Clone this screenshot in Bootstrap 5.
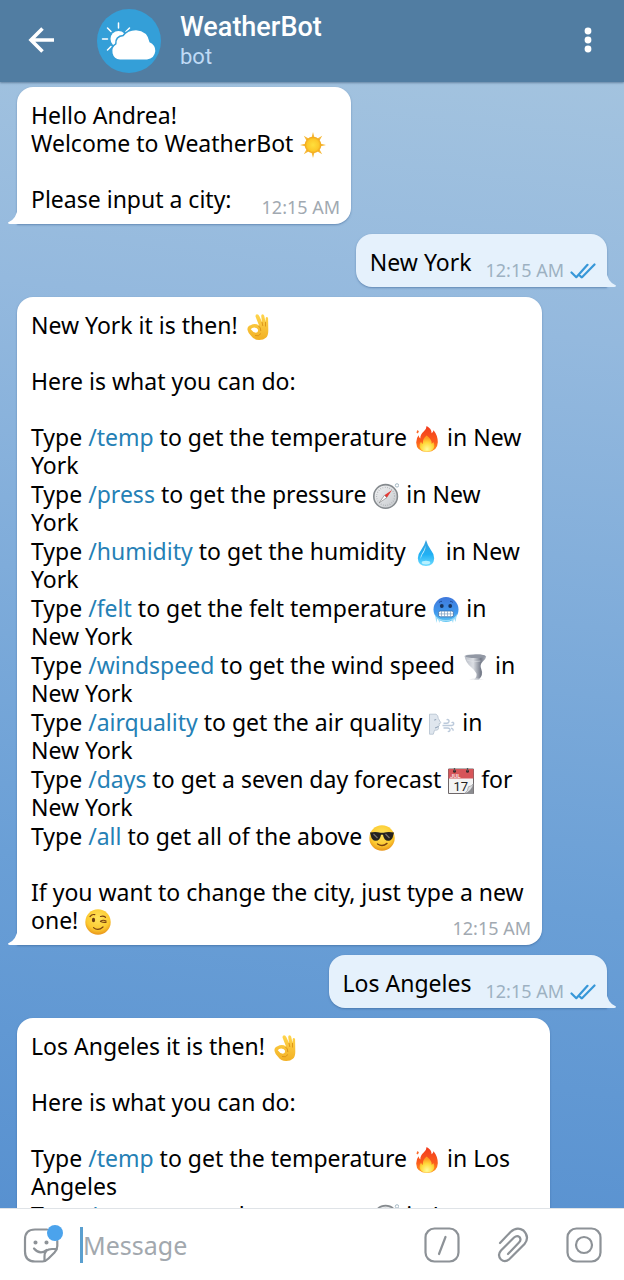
<!DOCTYPE html>
<html lang="en">
<head>
<meta charset="utf-8">
<meta name="viewport" content="width=device-width, initial-scale=1">
<title>WeatherBot</title>
<link href="https://cdn.jsdelivr.net/npm/bootstrap@5.3.0/dist/css/bootstrap.min.css" rel="stylesheet">
<style>
  body { font-family: "Noto Sans", "Open Sans", sans-serif; color: #000; background: #5c95d3; }
  .topbar { background: #517da2; height: 82px; padding: 0 20px 0 25px; box-shadow: 0 1px 2px rgba(40, 70, 100, .5); z-index: 2; font-family: Roboto, sans-serif; }
  .icon-btn { border: 0; padding: 0; background: none; display: flex; }
  .avatar { width: 64px; height: 64px; margin-left: 36px; }
  .bot-title { margin-left: 19px; }
  .bot-name { font-size: 27px; line-height: 32px; font-weight: 500; color: #fff; margin: 0; }
  .bot-kind { font-size: 22px; line-height: 28px; color: #bfdaf5; margin: 0; }
  .chat { background: linear-gradient(186deg, #a3c3df 0%, #94b9de 22%, #6a9fd6 70%, #5891d0 100%); padding: 5px 17px 0; gap: 10px; }
  .bubble { position: relative; border-radius: 16px; background: #fff; padding: 14px 11px 11px 14px; font-size: 23px; line-height: 28px; box-shadow: 0 1px 2px rgba(50, 90, 140, .5); flex-shrink: 0; }
  .bubble p, .bubble ul { margin: 0 0 28px; }
  .bubble li { margin-bottom: 1px; }
  .bubble a { color: #2580b5; text-decoration: none; }
  .bubble.from-bot { align-self: flex-start; border-bottom-left-radius: 0; }
  .bubble.from-me { align-self: flex-end; border-bottom-right-radius: 0; background: #e5f1fc; }
  .bubble.reply { width: calc(100% - 65px); }
  .bubble.reply-wide { width: calc(100% - 57px); }
  .tail { position: absolute; bottom: 0; width: 10px; height: 18px; }
  .from-bot .tail { right: 100%; margin-right: -1px; }
  .from-me .tail { left: 100%; margin-left: -1px; }
  .last-line { gap: 30px; }
  .stamp { font-size: 18px; line-height: 20px; color: #a1a9b1; margin-bottom: -4px; }
  .from-me .stamp { color: #9db1c2; margin-left: 14px; }
  .from-me .read { margin: 0 0 -3px 6px; }
  .emo { width: 26px; height: 26px; vertical-align: -3px; margin: -3px 1px; }
  .composer { background: #fff; height: 72px; padding: 0 22px; border-top: 1px solid #dfe3e7; z-index: 2; color: #8d9297; }
  .composer button { color: inherit; }
  .composer input { border: 0; outline: 0; background: none; font-size: 25px; line-height: 32px; padding: 0; min-width: 0; border-left: 3px solid #5a9fcf; height: 36px; }
  .composer input::placeholder { color: #a2a8ae; opacity: 1; }
  .composer-tools { gap: 37px; }
</style>
</head>
<body class="vh-100 d-flex flex-column overflow-hidden">

<svg width="0" height="0" class="position-absolute" aria-hidden="true">
  <defs>
    <radialGradient id="gFace" cx=".5" cy=".35" r=".65"><stop offset="0" stop-color="#ffe45c"/><stop offset=".7" stop-color="#fcc92f"/><stop offset="1" stop-color="#e9951a"/></radialGradient>
    <radialGradient id="gSun"><stop offset="0" stop-color="#ffdf3d"/><stop offset=".7" stop-color="#fdc92a"/><stop offset="1" stop-color="#f0a31b"/></radialGradient>
    <linearGradient id="gHand" x2="0" y2="1"><stop offset="0" stop-color="#ffd54c"/><stop offset="1" stop-color="#f2b024"/></linearGradient>
    <linearGradient id="gFire" x2="0" y2="1"><stop offset="0" stop-color="#f23a1d"/><stop offset=".6" stop-color="#fb5c1c"/><stop offset="1" stop-color="#ff9a1e"/></linearGradient>
    <radialGradient id="gFlame" cx=".5" cy=".85" r=".7"><stop offset="0" stop-color="#fffb9a"/><stop offset=".6" stop-color="#ffd93a"/><stop offset="1" stop-color="#ff9c22"/></radialGradient>
    <linearGradient id="gMetal" x2="1" y2="1"><stop offset="0" stop-color="#f4f5f6"/><stop offset="1" stop-color="#c4c7cb"/></linearGradient>
    <linearGradient id="gDrop" x2="0" y2="1"><stop offset="0" stop-color="#3aa0dc"/><stop offset=".55" stop-color="#1fb0f4"/><stop offset="1" stop-color="#6fdcff"/></linearGradient>
    <linearGradient id="gCold" x2="0" y2="1"><stop offset="0" stop-color="#3f78dc"/><stop offset=".6" stop-color="#3f97ec"/><stop offset="1" stop-color="#58c3f3"/></linearGradient>
    <linearGradient id="gTwist"><stop offset="0" stop-color="#b9bec7"/><stop offset=".4" stop-color="#dcdfe4"/><stop offset=".75" stop-color="#767c8a"/><stop offset="1" stop-color="#b0b5bf"/></linearGradient>
    <symbol id="sun" viewBox="0 0 26 26">
      <path fill="#f6b93a" d="M13 0l1.600 6h-3.200zM13 26l1.600-6h-3.200zM0 13l6-1.600v3.200zM26 13l-6-1.600v3.200zM3.800 3.800l5.200 2.900-2.300 2.300zM22.200 3.800l-2.900 5.200-2.300-2.300zM3.800 22.200l2.900-5.200 2.300 2.300zM22.200 22.200l-5.200-2.900 2.300-2.300z"/>
      <circle cx="13" cy="13" r="8.300" fill="url(#gSun)"/>
    </symbol>
    <symbol id="ok" viewBox="0 0 26 26">
      <path d="M14 11.500L10.500 2.600Q10.300.500 12 .300q1.500 0 2.400 2L17 8 16.200 1.900q0-1.600 1.400-1.700 1.200 0 1.600 1.600l1.300 6 .2-3.500q.2-1.300 1.300-1.200 1 .1 1.100 1.500l.2 11.800q0 5.500-2.400 7.300-2.300 2.300-6.700 2.300-5.400 0-8-4Q3.300 19.500 2.500 15.900q-.5-3.500 3-4.600Q10 8.800 14 11.500z" fill="url(#gHand)"/>
      <path d="M5.800 15.300q1-2 3.600-1.900 3 .3 3.700 2.300.3 2.400-2.100 3.100-2.900-.1-5.200-3.500z" fill="#fff"/>
      <path d="M13.500 12q2.500 1.400 2.300 5M17 8l.8 4M20.500 8v4.500M10 21.500q3.500 1.500 6-2" fill="none" stroke="#d99119" stroke-width=".9"/>
    </symbol>
    <symbol id="fire" viewBox="0 0 26 26">
      <path d="M12.600 0q5 2.600 5 7.200 1.600-.8 1.900-3 4.300 5 4.300 12Q23.600 25.600 13 26 2.400 25.600 2.200 16.500q0-4.500 2.400-7.300.2 2.600 1.700 3.200Q6.200 8.500 9.700 5.600 12.500 3.200 12.600 0z" fill="url(#gFire)"/>
      <path d="M3.500 4l1.400 1.200-1 2.200-1.500-1z" fill="#fb6a2a"/>
      <path d="M12.600 9.500q5.800 4.500 5 8.200 1.300-.4 1.700-1.700 1.500 2.200 1 4.800Q19 25.700 13 25.700t-7.400-5q-.3-3 1.400-5.200.6 2 1.700 2.400Q8.600 12.500 12.600 9.500z" fill="url(#gFlame)"/>
    </symbol>
    <symbol id="compass" viewBox="0 0 26 26">
      <circle cx="24" cy="2.400" r="1.700" fill="none" stroke="#9bb0bd" stroke-width=".9"/>
      <circle cx="12.600" cy="13.400" r="11.800" fill="url(#gMetal)" stroke="#858a8e" stroke-width="1.600"/>
      <circle cx="12.600" cy="13.400" r="9" fill="none" stroke="#9da1a5" stroke-width="1.200" stroke-dasharray=".6 1.700"/>
      <path d="M19 7l-5.200 7.700-2.400-2.400z" fill="#e33a35"/><path d="M6.200 19.800l5.200-7.500 2.400 2.400z" fill="#fff" stroke="#777" stroke-width=".6"/>
    </symbol>
    <symbol id="drop" viewBox="0 0 26 26">
      <path d="M13 0q1.500 5.500 5.200 10.600 3.200 4 3 7.600Q20.800 26 13 26t-8.200-7.800q-.2-3.600 3-7.600Q11.500 5.500 13 0z" fill="url(#gDrop)"/>
      <path d="M12.500 5.500q-.8 4-3.500 8-2 3-1.500 5.500 1-4 3.500-7 1.800-3 1.500-6.500z" fill="#c6efff"/><ellipse cx="13" cy="22.600" rx="4.300" ry="1.900" fill="#b7f1ff"/>
    </symbol>
    <symbol id="cold" viewBox="0 0 26 26">
      <circle cx="13" cy="12.500" r="12.500" fill="url(#gCold)"/>
      <path d="M2 18l1.500 8 1-5 2 5 .5-3 3 1.500 3-.3 3 .3 2.500-2 1.500 3.500 1-5 1.500 4L24 17q-3 6-11 6T2 18z" fill="#9bdcf8"/>
      <circle cx="8.800" cy="9" r="1.900" fill="#16335e"/><circle cx="17.200" cy="9" r="1.900" fill="#16335e"/>
      <path d="M6 5.500q1-1.200 3-1.200M17 4.300q2 0 3 1.200" stroke="#214e9b" fill="none"/>
      <rect x="5.500" y="14" width="15" height="5.800" rx="1.700" fill="#fff" stroke="#3b6ea8" stroke-width=".8"/>
      <path d="M5.500 16.900h15M8.500 14v5.800M11.500 14v5.800M14.500 14v5.800M17.500 14v5.800" stroke="#7e9fc2" stroke-width=".7"/>
    </symbol>
    <symbol id="tornado" viewBox="0 0 26 26">
      <path d="M2.500 2Q4 0 14 .200 23.500.300 24.200 2.600 24 5 20.800 7.500q-3.500 3.200-1.500 7.500 2.500 6-2.500 10.500l-4.800.3q3.500-3.300 2.300-6.500Q13 16.500 9.500 13.500 3.600 9 2.500 2z" fill="url(#gTwist)"/>
      <ellipse cx="13.500" cy="2.200" rx="10" ry="1.700" fill="#9298a4"/>
      <path d="M5 6q6 3 13.500 1" stroke="#e0e3e7" stroke-width=".6" fill="none"/>
      <path d="M7 25.500q6-2 15 0z" fill="#e0e2e6"/>
    </symbol>
    <symbol id="breeze" viewBox="0 0 26 26">
      <path d="M.500 3.200H7q2.300 1 2.200 4.100l2.500 4.300q0 1-1.700 1.100l.3 2-1.300 1 .7 1.500q-.3 2.600-4.200 2l-1.200 4H.500z" fill="#dfe6ee" stroke="#b9c5d3" stroke-width=".9"/>
      <path d="M7.200 8.500l-2 .6M6 17l3.500-1.500" stroke="#8da0b6"/>
      <path d="M13.500 14.500h6M14.500 17h4q3 .2 2.500 2.300-.6 1.700-2.200.9M14.500 12.300h3.200q2.600-.2 2.300-2.600-.6-1.800-2.400-.9M19.500 14.500h3.300q2.400-.5 1.800-2.600-1-1.200-2 .1M22 17.300q2.700.4 1.900 2.500" fill="none" stroke="#bccadb" stroke-width="1.400"/>
    </symbol>
    <symbol id="calendar" viewBox="0 0 26 26">
      <path d="M.500 1h25v24.500H.500z" fill="#f4f4f4" stroke="#6d6668"/>
      <path d="M.500 1h25v9.500H.500z" fill="#d65559"/>
      <circle cx="6.500" cy="3.300" r="1.500" fill="#3a2628"/><circle cx="19.500" cy="3.300" r="1.500" fill="#3a2628"/><path d="M6.500 0v3.300M19.500 0v3.300" stroke="#555" stroke-width="1.300"/>
      <text x="2" y="9.600" font-size="6" font-weight="700" fill="#f5dede" font-family="Roboto,sans-serif">JUL</text>
      <text x="5.500" y="22.500" font-size="13" fill="#222" font-family="Roboto,sans-serif">17</text>
      <path d="M25.500 15.500q-1 6.500-9.500 10.500h9.500z" fill="#8c8c90"/><path d="M25.500 15.500q-1.500 3-5 3.200 0 4-4.500 7.300 8-2.500 9.500-10.500z" fill="#dcdde0" stroke="#77777b" stroke-width=".5"/>
    </symbol>
    <symbol id="cool" viewBox="0 0 26 26">
      <circle cx="13" cy="13" r="12.700" fill="url(#gFace)"/>
      <path d="M1 7.500q6-1.200 10.500.3h3q4.500-1.500 10.500-.3l-.7 2.500q-1 5.800-5 5.800-4.500 0-5.300-6h-2q-.8 6-5.300 6-4 0-5-5.800z" fill="#25221f"/>
      <path d="M4.500 9l4 4M16.500 9l4 4" stroke="#77716b" stroke-width="1.200"/>
      <path d="M8.500 19q5 3.200 9.500-.6" fill="none" stroke="#7c4311" stroke-width="1.400" stroke-linecap="round"/>
    </symbol>
    <symbol id="wink" viewBox="0 0 26 26">
      <circle cx="13" cy="13" r="12.700" fill="url(#gFace)"/>
      <ellipse cx="8.500" cy="11" rx="1.600" ry="2.200" fill="#6a3a10"/>
      <path d="M15.500 12.300q2.800-2 5.500-.2M15.500 12.500q3 1.200 5.500.8M5 7.600q2-2.700 4.800-1.900M15.500 7.500q3-1 5 .8M8.500 18.600q4.500 4 9.500-.6" fill="none" stroke="#7c4311" stroke-width="1.200" stroke-linecap="round"/>
    </symbol>
    <symbol id="checks" viewBox="0 0 26 16">
      <path d="M1.500 9.500l4.800 4.700L17.500 1.800M12 14.200L24.500 1.500M10 12.800l1.500 1.500" fill="none" stroke="#3797d8" stroke-width="2.200" stroke-linecap="round" stroke-linejoin="round"/>
    </symbol>
  </defs>
</svg>

<header class="topbar d-flex align-items-center flex-shrink-0 position-relative">
  <button type="button" class="icon-btn" aria-label="Back">
    <svg width="36" height="36" viewBox="0 0 36 36" fill="none" stroke="#fff" stroke-width="3.600"><path d="M29 17H6M17.500 5.500L6 17l11.500 11.500"/></svg>
  </button>
  <svg class="avatar flex-shrink-0" viewBox="0 0 64 64" aria-hidden="true">
    <circle cx="32" cy="32" r="32" fill="#349fd8"/>
    <g stroke="#fff" stroke-width="1.500" stroke-linecap="round"><path d="M21.500 14v5M10.500 19l3.500 3.500M5.500 30h5M10.500 41l3.500-3.500M32.500 19L29 22.500"/></g>
    <circle cx="21.500" cy="30" r="8" fill="#fff"/>
    <path d="M23 50.500a8.200 8.200 0 0 1-3.500-15.300q-.5-7.300 7-7.900Q30.500 21.500 39 21.300q11.500.7 13.500 11.900Q58.500 36 58.300 42q-.8 7.500-8.300 8.500z" fill="#fff" stroke="#349fd8" stroke-width="3" paint-order="stroke"/>
  </svg>
  <div class="bot-title flex-grow-1">
    <h1 class="bot-name">WeatherBot</h1>
    <p class="bot-kind">bot</p>
  </div>
  <button type="button" class="icon-btn" aria-label="More options">
    <svg width="32" height="32" viewBox="0 0 32 32" fill="#fff"><circle cx="16" cy="6" r="3.400"/><circle cx="16" cy="15" r="3.400"/><circle cx="16" cy="24" r="3.400"/></svg>
  </button>
</header>

<main class="chat flex-grow-1 d-flex flex-column overflow-hidden">
  <article class="bubble from-bot">
    <svg class="tail" viewBox="0 0 10 18"><path d="M10 0Q9 13 0 16.500q0 1.500 2 1.500h8z" fill="#fff"/></svg>
    <p>Hello Andrea!<br>Welcome to WeatherBot <svg class="emo" role="img" aria-label="sun"><use href="#sun"/></svg></p>
    <div class="last-line d-flex justify-content-between align-items-end"><span>Please input a city:</span><time class="stamp">12:15 AM</time></div>
  </article>

  <article class="bubble from-me d-flex align-items-end">
    <svg class="tail" viewBox="0 0 10 18"><path d="M0 0Q1 13 10 16.500q0 1.500-2 1.500H0z" fill="#e5f1fc"/></svg>
    <span>New York</span><time class="stamp">12:15 AM</time>
    <svg class="read" width="26" height="16" role="img" aria-label="Read"><use href="#checks"/></svg>
  </article>

  <article class="bubble from-bot reply">
    <svg class="tail" viewBox="0 0 10 18"><path d="M10 0Q9 13 0 16.500q0 1.500 2 1.500h8z" fill="#fff"/></svg>
    <p>New York it is then! <svg class="emo" role="img" aria-label="OK hand"><use href="#ok"/></svg></p>
    <p>Here is what you can do:</p>
    <ul class="list-unstyled">
      <li>Type <a href="#temp">/temp</a> to get the temperature <svg class="emo" role="img" aria-label="fire"><use href="#fire"/></svg> in New York</li>
      <li>Type <a href="#press">/press</a> to get the pressure <svg class="emo" role="img" aria-label="compass"><use href="#compass"/></svg> in New York</li>
      <li>Type <a href="#humidity">/humidity</a> to get the humidity <svg class="emo" role="img" aria-label="droplet"><use href="#drop"/></svg> in New York</li>
      <li>Type <a href="#felt">/felt</a> to get the felt temperature <svg class="emo" role="img" aria-label="cold face"><use href="#cold"/></svg> in New York</li>
      <li>Type <a href="#windspeed">/windspeed</a> to get the wind speed <svg class="emo" role="img" aria-label="tornado"><use href="#tornado"/></svg> in New York</li>
      <li>Type <a href="#airquality">/airquality</a> to get the air quality <svg class="emo" role="img" aria-label="wind face"><use href="#breeze"/></svg> in New York</li>
      <li>Type <a href="#days">/days</a> to get a seven day forecast <svg class="emo" role="img" aria-label="calendar"><use href="#calendar"/></svg> for New York</li>
      <li>Type <a href="#all">/all</a> to get all of the above <svg class="emo" role="img" aria-label="sunglasses"><use href="#cool"/></svg></li>
    </ul>
    <div>If you want to change the city, just type a new</div>
    <div class="last-line d-flex justify-content-between align-items-end"><span>one! <svg class="emo" role="img" aria-label="wink"><use href="#wink"/></svg></span><time class="stamp">12:15 AM</time></div>
  </article>

  <article class="bubble from-me d-flex align-items-end">
    <svg class="tail" viewBox="0 0 10 18"><path d="M0 0Q1 13 10 16.500q0 1.500-2 1.500H0z" fill="#e5f1fc"/></svg>
    <span>Los Angeles</span><time class="stamp">12:15 AM</time>
    <svg class="read" width="26" height="16" role="img" aria-label="Read"><use href="#checks"/></svg>
  </article>

  <article class="bubble from-bot reply-wide">
    <p>Los Angeles it is then! <svg class="emo" role="img" aria-label="OK hand"><use href="#ok"/></svg></p>
    <p>Here is what you can do:</p>
    <ul class="list-unstyled">
      <li>Type <a href="#temp">/temp</a> to get the temperature <svg class="emo" role="img" aria-label="fire"><use href="#fire"/></svg> in Los Angeles</li>
      <li>Type <a href="#press">/press</a> to get the pressure <svg class="emo" role="img" aria-label="compass"><use href="#compass"/></svg> in Los Angeles</li>
    </ul>
  </article>
</main>

<form class="composer d-flex align-items-center flex-shrink-0 position-relative" onsubmit="return false">
  <button type="button" class="icon-btn" aria-label="Stickers">
    <svg width="42" height="42" viewBox="0 0 42 42" fill="none" stroke="currentColor" stroke-width="2.200" stroke-linecap="round">
      <path d="M25 5.500H13q-10 0-10 10v12q0 10 10 10h7.500q3 0 6-3l6-6q2.800-3 2.800-6.500V17"/>
      <path d="M22.500 37v-4.500q0-7.500 7.500-7.500h4.500M12 24.500q6 7 12.500 1.500"/>
      <circle cx="13.500" cy="18.500" r="1.300" fill="currentColor" stroke-width="1.500"/><circle cx="24.500" cy="18.500" r="1.300" fill="currentColor" stroke-width="1.500"/>
      <circle cx="33" cy="9" r="8" fill="#4ba3ec" stroke="none"/>
    </svg>
  </button>
  <input type="text" class="flex-grow-1 ms-3" placeholder="Message" aria-label="Message">
  <div class="composer-tools d-flex align-items-center">
    <button type="button" class="icon-btn" aria-label="Commands">
      <svg width="36" height="36" viewBox="0 0 36 36" fill="none" stroke="currentColor" stroke-width="2.200" stroke-linecap="round"><rect x="1.500" y="1.500" width="33" height="33" rx="9"/><path d="M21.500 10l-6.500 17"/></svg>
    </button>
    <button type="button" class="icon-btn" aria-label="Attach">
      <svg width="32" height="36" viewBox="0 0 32 36" fill="none" stroke="currentColor" stroke-width="2.200" stroke-linecap="round"><path d="M3 16L13.500 5Q20-1 26.500 3.500 33 10 27.500 17L12.500 32Q8 36 4 32.500 0 28 4 23.500L17 10.500q3-2.500 5.500-.5 2.200 3-.5 5.500L11 27"/></svg>
    </button>
    <button type="button" class="icon-btn" aria-label="Camera">
      <svg width="36" height="36" viewBox="0 0 36 36" fill="none" stroke="currentColor" stroke-width="2.200"><rect x="1.500" y="1.500" width="33" height="33" rx="9"/><circle cx="18" cy="18" r="8"/></svg>
    </button>
  </div>
</form>

<script src="https://cdn.jsdelivr.net/npm/bootstrap@5.3.0/dist/js/bootstrap.bundle.min.js"></script>
</body>
</html>
